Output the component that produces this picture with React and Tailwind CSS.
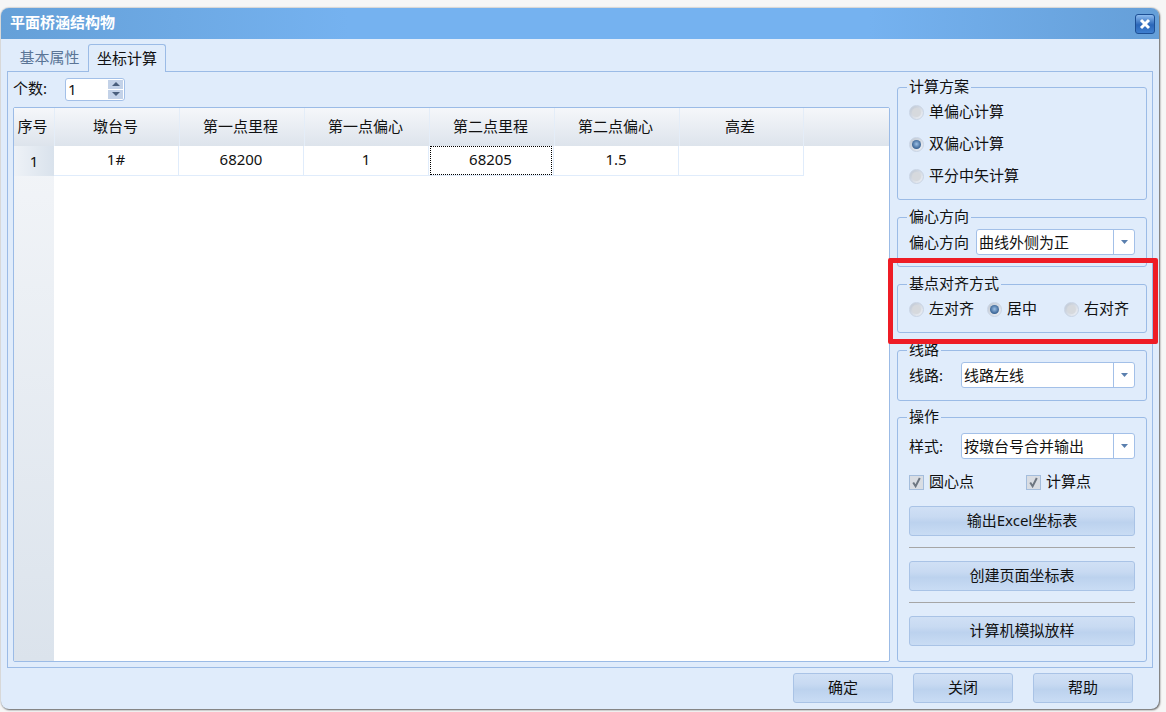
import React from 'react';

const columns = [
  { title: '墩台号', value: '1#' },
  { title: '第一点里程', value: '68200' },
  { title: '第一点偏心', value: '1' },
  { title: '第二点里程', value: '68205', focused: true },
  { title: '第二点偏心', value: '1.5' },
  { title: '高差', value: '' },
];

function Radio({ label, checked, className = '' }) {
  return (
    <div className={`flex items-center gap-[5px] ${className}`}>
      <span className="w-[15px] h-[15px] shrink-0 rounded-full border border-[#c9d4e4] bg-gradient-to-br from-[#bfc7d2] to-[#eef1f6] flex items-center justify-center">
        {checked ? (
          <span className="w-[9px] h-[9px] rounded-full bg-[radial-gradient(circle_at_50%_45%,#9cc0e6,#2f5a8c_75%)]" />
        ) : (
          <span className="w-[9px] h-[9px] rounded-full bg-[#d6d9dd]" />
        )}
      </span>
      <span className="pb-[2px]">{label}</span>
    </div>
  );
}

function Check({ label, className = '' }) {
  return (
    <div className={`flex items-center gap-[5px] ${className}`}>
      <span className="w-[15px] h-[15px] shrink-0 border border-[#a4bddc] bg-[#d9dde3] flex items-center justify-center">
        <svg width="11" height="11" viewBox="0 0 11 11" fill="none">
          <path d="M2.2 5.5 L4.6 9.2 L8.8 1" stroke="#6d7680" strokeWidth="2" />
        </svg>
      </span>
      <span className="pb-[2px]">{label}</span>
    </div>
  );
}

function Group({ title, className = '', children }) {
  return (
    <fieldset className={`border border-[#9bbbe6] rounded-[3px] px-[11px] mx-0 min-w-0 ${className}`}>
      <legend className="px-[2px] -ml-[2px] text-[15px] leading-[16px] relative -top-[1px]">{title}</legend>
      {children}
    </fieldset>
  );
}

function Combo({ value, className = '' }) {
  return (
    <div className={`h-[26px] flex bg-white border border-[#a3c0e8] rounded-[3px] ${className}`}>
      <span className="flex-1 pl-[2px] leading-[24px] overflow-hidden whitespace-nowrap">{value}</span>
      <span className="w-[21px] border-l border-[#a3c0e8] flex items-center justify-center">
        <svg width="7" height="4" viewBox="0 0 7 4"><path d="M0 0 H7 L3.5 4 Z" fill="#5a7fae" /></svg>
      </span>
    </div>
  );
}

function Btn({ label, className = '' }) {
  return (
    <button className={`h-[30px] pb-[2px] border border-[#a9c3e6] rounded-[3px] bg-[linear-gradient(#d0e0f5_0%,#c8daf2_35%,#bcd2ee_55%,#c9dcf4_100%)] text-[15px] text-[#111] ${className}`}>
      {label}
    </button>
  );
}

export default function App() {
  return (
    <div className="w-[1166px] h-[712px] bg-[#f6f6f6] pt-[8px] pl-[1px] font-['Noto_Sans','Noto_Sans_CJK_SC',sans-serif] text-[15px] text-[#111] overflow-hidden">
      <div className="relative w-[1158px] h-[701px] rounded-[8px] bg-[#e0ecfb] shadow-[1px_1px_2px_rgba(0,0,0,0.55),0_0_2px_rgba(0,0,0,0.35)] flex flex-col">
        {/* title bar */}
        <div className="h-[31px] shrink-0 rounded-t-[8px] bg-[linear-gradient(90deg,#65a0d8_0%,#75b2f0_30%,#75b2f0_75%,#659fd8_100%)] flex items-center justify-between pl-[9px] pr-[4px]">
          <span className="text-white font-bold text-[15px] pb-[2px]">平面桥涵结构物</span>
          <span className="w-[20px] h-[20px] rounded-[3px] border border-[#1d4f94] bg-[linear-gradient(#8dbcf0,#2a66b8_55%,#3f7fd0)] flex items-center justify-center">
            <svg width="14" height="12" viewBox="0 0 14 12"><path d="M3 2 L11 10 M11 2 L3 10" stroke="#fff" strokeWidth="3" /></svg>
          </span>
        </div>

        {/* tabs */}
        <div className="h-[32px] shrink-0 pl-[6px] flex items-end relative z-10">
          <div className="w-[81px] h-[27px] pl-[4px] text-center leading-[26px] text-[#5b7596]">基本属性</div>
          <div className="w-[78px] h-[28px] -mb-px text-center leading-[26px] bg-[#e0ecfb] border border-b-0 border-[#9bbbe6] rounded-t-[3px]">坐标计算</div>
        </div>

        {/* tab page */}
        <div className="ml-[6px] w-[1146px] h-[597px] shrink-0 border border-[#9bbbe6] flex pt-[5px] pl-[5px]">
          <div className="w-[877px] flex flex-col">
            <div className="h-[24px] flex items-center shrink-0">
              <span className="w-[52px] pb-[2px]">个数:</span>
              <div className="w-[60px] h-[23px] flex bg-white border border-[#a3c0e8] rounded-[3px]">
                <span className="flex-1 pl-[2px] leading-[20px]">1</span>
                <div className="w-[15px] flex flex-col gap-px py-px mr-px">
                  <span className="flex-1 bg-[#c3d2e8] flex items-center justify-center">
                    <svg width="8" height="4" viewBox="0 0 8 4"><path d="M0 4 H8 L4 0 Z" fill="#4a5f7d" /></svg>
                  </span>
                  <span className="flex-1 bg-[#c3d2e8] flex items-center justify-center">
                    <svg width="8" height="4" viewBox="0 0 8 4"><path d="M0 0 H8 L4 4 Z" fill="#4a5f7d" /></svg>
                  </span>
                </div>
              </div>
            </div>

            {/* grid */}
            <div className="mt-[6px] h-[555px] border border-[#9bbbe6] rounded-[2px] bg-white flex overflow-hidden">
              <div className="w-[40px] shrink-0 flex flex-col bg-[linear-gradient(#f4f6f9,#dbe3ec)]">
                <div className="h-[38px] pb-[2px] pr-[3px] flex items-center justify-center bg-[linear-gradient(#f5f7fa,#dde4ec)]">序号</div>
                <div className="h-[30px] flex items-center justify-center bg-[linear-gradient(90deg,#eef2f7,#d9e2ec)]">1</div>
              </div>
              <div className="flex-1 flex flex-col">
                <div className="h-[38px] flex bg-[linear-gradient(#f5f7fa,#dde4ec)]">
                  {columns.map((c) => (
                    <div key={c.title} className="w-[125px] pb-[2px] pr-[3px] border-l border-[#e4edf8] last:border-r flex items-center justify-center">
                      {c.title}
                    </div>
                  ))}
                </div>
                <div className="h-[30px] flex">
                  {columns.map((c) => (
                    <div key={c.title} className="w-[125px] border-r border-b border-[#e0ecfb] pb-[2px] flex items-center justify-center">
                      {c.focused ? (
                        <span className="w-[122px] h-[29px] -ml-[1px] -mb-[2px] pb-[2px] border border-dotted border-black flex items-center justify-center">{c.value}</span>
                      ) : c.value}
                    </div>
                  ))}
                </div>
              </div>
            </div>
          </div>

          {/* right panel */}
          <div className="ml-[7px] w-[250px] flex flex-col">
            <Group title="计算方案" className="h-[121px] mt-[2px]">
              <div className="pt-[1px]">
                <Radio label="单偏心计算" className="h-[32px]" />
                <Radio label="双偏心计算" checked className="h-[32px]" />
                <Radio label="平分中矢计算" className="h-[32px]" />
              </div>
            </Group>
            <Group title="偏心方向" className="h-[58px] mt-[9px]">
              <div className="flex items-center justify-between mt-[4px]">
                <span>偏心方向</span>
                <Combo value="曲线外侧为正" className="w-[159px]" />
              </div>
            </Group>
            <Group title="基点对齐方式" className="h-[57px] mt-[9px]">
              <div className="flex h-[26px] mt-[4px]">
                <Radio label="左对齐" className="w-[78px]" />
                <Radio label="居中" checked className="w-[77px]" />
                <Radio label="右对齐" />
              </div>
            </Group>
            <Group title="线路" className="h-[59px] mt-[9px]">
              <div className="flex items-center justify-between mt-[4px]">
                <span>线路:</span>
                <Combo value="线路左线" className="w-[174px]" />
              </div>
            </Group>
            <Group title="操作" className="h-[253px] mt-[8px]">
              <div className="flex items-center justify-between mt-[8px]">
                <span>样式:</span>
                <Combo value="按墩台号合并输出" className="w-[174px]" />
              </div>
              <div className="flex mt-[14px] h-[18px]">
                <Check label="圆心点" className="w-[117px]" />
                <Check label="计算点" />
              </div>
              <Btn label="输出Excel坐标表" className="w-full mt-[15px]" />
              <div className="h-px bg-[#a6a6a6] mt-[11px]" />
              <Btn label="创建页面坐标表" className="w-full mt-[13px]" />
              <div className="h-px bg-[#a6a6a6] mt-[11px]" />
              <Btn label="计算机模拟放样" className="w-full mt-[13px]" />
            </Group>
          </div>
        </div>

        {/* footer */}
        <div className="flex justify-end gap-[20px] pr-[26px] pt-[5px]">
          <Btn label="确定" className="w-[100px]" />
          <Btn label="关闭" className="w-[100px]" />
          <Btn label="帮助" className="w-[100px]" />
        </div>

        {/* red highlight */}
        <div className="absolute left-[887px] top-[250px] w-[270px] h-[86px] border-[5px] border-[#ee1c25] rounded-[2px]" />
      </div>
    </div>
  );
}
